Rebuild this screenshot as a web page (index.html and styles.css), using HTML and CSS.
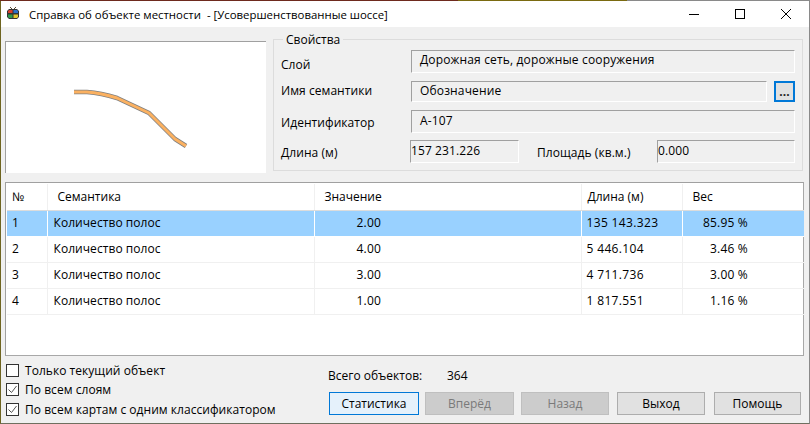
FILE: index.html
```html
<!DOCTYPE html>
<html lang="ru">
<head>
<meta charset="utf-8">
<title>Справка об объекте местности</title>
<link rel="stylesheet" href="styles.css">
</head>
<body>
<div class="window">
  <div class="window-edge"></div>
  <header class="titlebar">
    <svg class="app-icon" width="14" height="14" viewBox="0 0 14 14">
      <path d="M4 0l2 2M10 0L8 2" stroke="#5a4a30" fill="none"/>
      <path d="M3 2h8l2 2v6l-2 2H3l-2-2V4z" fill="#333"/>
      <path d="M3 3h3.500v3H2V4z" fill="#d8402a"/>
      <path d="M7.500 3H11l1 1v2H7.500z" fill="#2c6fc8"/>
      <path d="M2 7.500h4.500V11H3l-1-1z" fill="#2f9a4c"/>
      <path d="M7.500 7.500H12V10l-1 1H7.500z" fill="#e3c52c"/>
    </svg>
    <span class="title-text">Справка об объекте местности&nbsp; - [Усовершенствованные шоссе]</span>
    <div class="win-controls">
      <svg width="46" height="26" viewBox="0 0 46 26"><path d="M18 13.500h10" stroke="#000" fill="none"/></svg>
      <svg width="46" height="26" viewBox="0 0 46 26"><rect x="18.500" y="8.500" width="9" height="9" stroke="#000" fill="none"/></svg>
      <svg width="46" height="26" viewBox="0 0 46 26"><path d="M18 8l10 10M28 8L18 18" stroke="#000" fill="none"/></svg>
    </div>
  </header>
  <main class="content">
    <section class="top">
      <div class="preview">
        <svg width="261" height="132" viewBox="0 0 261 132">
          <path class="road-edge" d="M69 51h13q14 1 30 6l32 15 26 26 11 7"/>
          <path class="road-fill" d="M69 51h13q14 1 30 6l32 15 26 26 11 7"/>
        </svg>
      </div>
      <div class="props">
        <span class="legend">Свойства</span>
        <div class="prop-row row-layer">
          <span class="prop-label">Слой</span>
          <div class="field field-text">Дорожная сеть, дорожные сооружения</div>
        </div>
        <div class="prop-row row-sem">
          <span class="prop-label">Имя семантики</span>
          <div class="field field-text">Обозначение</div>
          <button class="more-btn" type="button">...</button>
        </div>
        <div class="prop-row row-id">
          <span class="prop-label">Идентификатор</span>
          <div class="field field-text">А-107</div>
        </div>
        <div class="prop-row row-len">
          <span class="prop-label">Длина (м)</span>
          <div class="field field-num len-field">157 231.226</div>
          <span class="area-label">Площадь (кв.м.)</span>
          <div class="field field-num area-field">0.000</div>
        </div>
      </div>
    </section>
    <section class="table-box">
      <table class="grid">
        <colgroup>
          <col class="c-n"><col class="c-sem"><col class="c-val"><col class="c-len"><col class="c-w">
        </colgroup>
        <thead>
          <tr><th class="h-n">№</th><th class="h-sem">Семантика</th><th class="h-val">Значение</th><th class="h-len">Длина (м)</th><th class="h-w">Вес</th></tr>
        </thead>
        <tbody>
          <tr class="selected"><td>1</td><td>Количество полос</td><td class="val">2.00</td><td class="len">135 143.323</td><td class="wt">85.95 %</td></tr>
          <tr><td>2</td><td>Количество полос</td><td class="val">4.00</td><td class="len">5 446.104</td><td class="wt">3.46 %</td></tr>
          <tr><td>3</td><td>Количество полос</td><td class="val">3.00</td><td class="len">4 711.736</td><td class="wt">3.00 %</td></tr>
          <tr><td>4</td><td>Количество полос</td><td class="val">1.00</td><td class="len">1 817.551</td><td class="wt">1.16 %</td></tr>
        </tbody>
      </table>
    </section>
    <section class="bottom">
      <div class="checks">
        <label class="check"><span class="box"></span>Только текущий объект</label>
        <label class="check"><span class="box"><svg width="11" height="11" viewBox="0 0 11 11"><path d="M1.500 5.500l3 3 5-6.500" stroke="#555" fill="none"/></svg></span>По всем слоям</label>
        <label class="check check-last"><span class="box"><svg width="11" height="11" viewBox="0 0 11 11"><path d="M1.500 5.500l3 3 5-6.500" stroke="#555" fill="none"/></svg></span>По всем картам с одним классификатором</label>
      </div>
      <div class="actions">
        <div class="total"><span class="total-label">Всего объектов:</span><span>364</span></div>
        <div class="buttons">
          <button class="btn btn-focus b-stat" type="button">Статистика</button>
          <button class="btn btn-off b-next" type="button">Вперёд</button>
          <button class="btn btn-off b-back" type="button">Назад</button>
          <button class="btn b-exit" type="button">Выход</button>
          <button class="btn b-help" type="button">Помощь</button>
        </div>
      </div>
    </section>
  </main>
</div>
</body>
</html>
```
FILE: styles.css
```css
* { box-sizing: border-box; }
html, body { margin: 0; padding: 0; }
body {
  width: 810px;
  height: 424px;
  overflow: hidden;
  font-family: "Open Sans", "Noto Sans", sans-serif;
  font-size: 12px;
  color: #000;
}
.window {
  width: 810px;
  height: 424px;
  display: flex;
  flex-direction: column;
  background: #f0f0f0;
  border-left: 1px solid #6e6420;
  border-right: 1px solid #8a8a8a;
  border-bottom: 1px solid #6f6f5f;
}
.window-edge {
  height: 1px;
  flex: none;
  margin-left: -1px;
  margin-right: -1px;
  background: linear-gradient(90deg, #6e2a1e 0, #6e2a1e 458px, #7a6a10 458px, #7a6a10 627px, #8a8a8a 627px);
}
.titlebar {
  height: 26px;
  flex: none;
  display: flex;
  align-items: center;
  background: #fff;
  padding-left: 5px;
}
.app-icon { flex: none; }
.title-text { margin-left: 9px; white-space: pre; font-size: 11.4px; }
.win-controls { margin-left: auto; display: flex; }
.content { flex: 1; padding: 12px 5px 0 4px; display: flex; flex-direction: column; }
.top { display: flex; height: 134px; flex: none; }
.preview {
  width: 261px;
  height: 132px;
  margin-top: 2px;
  flex: none;
  background: #fff;
  border-top: 1px solid #a0a0a0;
  border-left: 1px solid #a0a0a0;
}
.preview svg { display: block; margin: -1px 0 0 -1px; }
.road-edge, .road-fill { fill: none; stroke-linejoin: round; }
.road-edge { stroke: #808080; stroke-width: 4.500; }
.road-fill { stroke: #fbb161; stroke-width: 3; }
.props {
  position: relative;
  width: 530px;
  height: 132px;
  margin-left: 7px;
  border: 1px solid #dcdcdc;
  padding: 0 7px;
}
.legend {
  position: absolute;
  top: -7px;
  left: 9px;
  padding: 0 3px;
  background: #f0f0f0;
  line-height: 14px;
}
.prop-row { display: flex; align-items: flex-start; letter-spacing: 0.060px; }
.row-layer { margin-top: 10px; height: 23px; }
.row-sem { margin-top: 8px; height: 21px; }
.row-id { margin-top: 8px; height: 23px; }
.row-len { margin-top: 7px; height: 23px; }
.prop-label { width: 130px; flex: none; padding-top: 6px; }
.row-sem .prop-label { padding-top: 1px; }
.row-id .prop-label { padding-top: 4px; }
.row-len .prop-label { padding-top: 4px; }
.field {
  height: 100%;
  background: #f0f0f0;
  border-top: 1px solid #a0a0a0;
  border-left: 1px solid #a0a0a0;
  border-right: 1px solid #fff;
  border-bottom: 1px solid #fff;
}
.field-text { flex: 1; padding-left: 8px; line-height: 17px; letter-spacing: 0.150px; }
.row-id .field-text { line-height: 19px; }
.field-num { padding-left: 0; line-height: 20px; letter-spacing: 0.100px; }
.more-btn {
  width: 21px;
  height: 21px;
  flex: none;
  margin-left: 7px;
  font: inherit;
  font-weight: 700;
  background: #e1e1e1;
  border: 2px solid #0078d7;
  padding: 0;
  line-height: 15px;
  color: #222;
}
.len-field { width: 109px; margin-left: -1px; }
.area-label { margin-left: 18px; width: 120px; padding-top: 4px; flex: none; }
.area-field { flex: 1; }
.table-box {
  height: 174px;
  margin-top: 9px;
  flex: none;
  background: #fff;
  border-top: 1px solid #a0a0a0;
  border-left: 1px solid #a0a0a0;
  border-right: 1px solid #a8a8a8;
  border-bottom: 1px solid #a8a8a8;
  padding: 1px;
}
.grid { border-collapse: collapse; table-layout: fixed; width: 797px; }
.c-n { width: 40px; }
.c-sem { width: 267px; }
.c-val { width: 267px; }
.c-len { width: 101px; }
.c-w { width: 122px; }
.grid th {
  height: 26px;
  font-weight: 400;
  text-align: left;
  padding: 0;
  border-right: 1px solid #f0f0f0;
  border-bottom: 1px solid #dcdcdc;
}
.grid td {
  height: 26px;
  padding: 0 0 2px;
  border-right: 1px solid #f0f0f0;
  border-bottom: 1px solid #f0f0f0;
  white-space: pre;
}
.grid th:last-child, .grid td:last-child { border-right: 0; }
.h-n { padding-left: 5px !important; }
.h-sem { padding-left: 10px !important; }
.h-val { padding-left: 10px !important; }
.h-len { padding-left: 6px !important; }
.h-w { padding-left: 10px !important; }
.grid td:first-child { padding-left: 5px; }
.grid td:nth-child(2) { padding-left: 6px; letter-spacing: 0.060px; }
.grid td.len { padding-left: 5px; letter-spacing: 0.350px; }
.grid td.val { padding-left: 42px; letter-spacing: 0.200px; }
.grid td.wt { text-align: right; padding-right: 56px; letter-spacing: 0.200px; }
.selected td { background: #99d1ff; border-right-color: #fff; border-bottom-color: #fff; }
.bottom { display: flex; margin-top: 8px; }
.checks { width: 323px; flex: none; display: flex; flex-direction: column; padding-left: 1px; margin-top: -3px; letter-spacing: 0.040px; }
.check { display: flex; align-items: center; height: 19px; }
.check-last { margin-top: 1px; }
.box {
  width: 13px;
  height: 13px;
  flex: none;
  margin-right: 6px;
  border: 1px solid #333;
  background: #fff;
  display: flex;
}
.box svg { display: block; }
.actions { flex: 1; display: flex; flex-direction: column; }
.total { height: 20px; display: flex; align-items: center; margin-top: 1px; }
.total-label { width: 119px; }
.buttons { display: flex; margin-top: 7px; margin-left: 1px; }
.btn {
  height: 23px;
  font: inherit;
  color: #000;
  background: #e1e1e1;
  border: 1px solid #adadad;
  padding: 0;
}
.btn-focus { background: #e5f1fb; border-color: #0078d7; }
.btn-off { background: #ccc; border-color: #bfbfbf; color: #7a7a7a; }
.b-stat { width: 90px; }
.b-next { width: 89px; margin-left: 6px; }
.b-back { width: 88px; margin-left: 7px; }
.b-exit { width: 88px; margin-left: 8px; }
.b-help { width: 87px; margin-left: 9px; }
```
